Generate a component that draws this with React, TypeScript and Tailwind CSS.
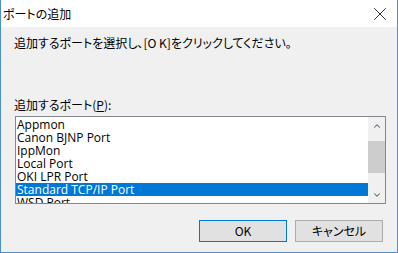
import { X, ChevronUp, ChevronDown } from "lucide-react";

const ports = [
  "Appmon",
  "Canon BJNP Port",
  "IppMon",
  "Local Port",
  "OKI LPR Port",
  "Standard TCP/IP Port",
  "WSD Port",
];

export default function App() {
  const selected = 5;

  return (
    <div className="w-[398px] h-[253px] flex flex-col bg-[#f0f0f0] border-x border-b border-[#4a8fd0] text-[12px] text-black font-['Noto_Sans_CJK_JP',sans-serif] [font-feature-settings:'palt'] overflow-hidden">
      {/* title bar */}
      <div className="h-[27px] shrink-0 bg-white flex items-center justify-between pl-[2px] pr-[6px]">
        <span className="leading-none">ポートの追加</span>
        <X className="size-[22px] text-[#222]" strokeWidth={1} />
      </div>

      <div className="flex-1 flex flex-col px-[13px]">
        <p className="mt-[8px] leading-[16px]">追加するポートを選択し、[O K]をクリックしてください。</p>

        <p className="mt-[46px] leading-[16px]">
          追加するポート(<span className="underline">P</span>):
        </p>

        {/* list box */}
        <div className="mt-[3px] ml-px h-[88px] w-[371px] border border-[#828790] bg-white flex overflow-hidden">
          <ul className="flex-1 pt-px font-['Open_Sans',sans-serif] text-[12px]">
            {ports.map((p, i) => (
              <li
                key={p}
                className={
                  i === selected
                    ? "h-[13px] leading-[13px] pl-px bg-[#0078d7] text-white"
                    : "h-[13px] leading-[13px] pl-px"
                }
              >
                {p}
              </li>
            ))}
          </ul>
          <div className="w-[17px] bg-[#f0f0f0] flex flex-col">
            <div className="h-[17px] flex items-center justify-center text-[#606060]">
              <ChevronUp className="size-[10px]" strokeWidth={2.5} />
            </div>
            <div className="mt-[7px] h-[32px] bg-[#cdcdcd]" />
            <div className="flex-1" />
            <div className="h-[17px] flex items-center justify-center text-[#606060]">
              <ChevronDown className="size-[10px]" strokeWidth={2.5} />
            </div>
          </div>
        </div>

        {/* buttons */}
        <div className="mt-[16px] flex justify-end gap-[8px] pr-px">
          <button className="w-[88px] h-[22px] bg-[#e1e1e1] border border-[#0078d7] leading-none">
            OK
          </button>
          <button className="w-[88px] h-[22px] bg-[#e1e1e1] border border-[#adadad] leading-none">
            キャンセル
          </button>
        </div>
      </div>
    </div>
  );
}
